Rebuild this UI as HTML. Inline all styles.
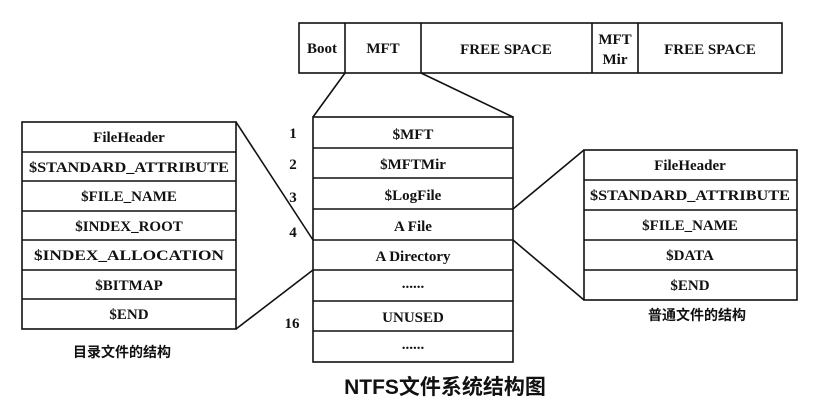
<!DOCTYPE html>
<html><head><meta charset="utf-8"><style>
html,body{margin:0;padding:0;background:#fff;width:827px;height:411px;overflow:hidden}
svg text{font-family:"Liberation Serif",serif;font-weight:bold;font-size:15px;fill:#111}
.cj{font-family:"Liberation Sans","Noto Sans CJK SC",sans-serif;font-size:14px}
</style></head><body>
<svg width="827" height="411" viewBox="0 0 827 411" xmlns="http://www.w3.org/2000/svg">
<g fill="none" stroke="#111" stroke-width="1.6">
<rect x="299" y="23" width="483" height="50"/>
<line x1="345" y1="23" x2="345" y2="73"/>
<line x1="421" y1="23" x2="421" y2="73"/>
<line x1="592" y1="23" x2="592" y2="73"/>
<line x1="638" y1="23" x2="638" y2="73"/>
<line x1="345" y1="73" x2="313" y2="117"/>
<line x1="421" y1="73" x2="513" y2="117"/>
<rect x="313" y="117" width="200" height="245"/>
<line x1="313" y1="148" x2="513" y2="148"/>
<line x1="313" y1="178" x2="513" y2="178"/>
<line x1="313" y1="209" x2="513" y2="209"/>
<line x1="313" y1="240" x2="513" y2="240"/>
<line x1="313" y1="270" x2="513" y2="270"/>
<line x1="313" y1="301" x2="513" y2="301"/>
<line x1="313" y1="331" x2="513" y2="331"/>
<rect x="22" y="122" width="214" height="207"/>
<line x1="22" y1="152" x2="236" y2="152"/>
<line x1="22" y1="181" x2="236" y2="181"/>
<line x1="22" y1="211" x2="236" y2="211"/>
<line x1="22" y1="240" x2="236" y2="240"/>
<line x1="22" y1="270" x2="236" y2="270"/>
<line x1="22" y1="299" x2="236" y2="299"/>
<line x1="236" y1="122" x2="313" y2="240"/>
<line x1="236" y1="329" x2="313" y2="270"/>
<rect x="584" y="150" width="213" height="150"/>
<line x1="584" y1="180" x2="797" y2="180"/>
<line x1="584" y1="210" x2="797" y2="210"/>
<line x1="584" y1="240" x2="797" y2="240"/>
<line x1="584" y1="270" x2="797" y2="270"/>
<line x1="513" y1="209" x2="584" y2="150"/>
<line x1="513" y1="240" x2="584" y2="300"/>
</g>
<g text-anchor="middle">
<text x="322" y="53" font-size="14">Boot</text>
<text x="383" y="53">MFT</text>
<text x="506" y="54" font-size="16">FREE SPACE</text>
<text x="615" y="44" font-size="14">MFT</text>
<text x="615" y="64" font-size="14">Mir</text>
<text x="710" y="54" font-size="16">FREE SPACE</text>
<text x="413" y="139" font-size="16">$MFT</text>
<text x="413" y="169" font-size="16">$MFTMir</text>
<text x="413" y="200" font-size="16">$LogFile</text>
<text x="413" y="231" font-size="16">A File</text>
<text x="413" y="261" font-size="16">A Directory</text>
<text x="413" y="288" font-size="12">......</text>
<text x="413" y="322" font-size="16">UNUSED</text>
<text x="413" y="349" font-size="12">......</text>
<text x="293" y="138">1</text>
<text x="293" y="169">2</text>
<text x="293" y="202">3</text>
<text x="293" y="237">4</text>
<text x="292" y="328">16</text>
<text x="129" y="142">FileHeader</text>
<text x="129" y="172" textLength="200" lengthAdjust="spacingAndGlyphs" font-size="16">$STANDARD_ATTRIBUTE</text>
<text x="129" y="201" font-size="16">$FILE_NAME</text>
<text x="129" y="231" font-size="16">$INDEX_ROOT</text>
<text x="129" y="260" textLength="190" lengthAdjust="spacingAndGlyphs" font-size="16">$INDEX_ALLOCATION</text>
<text x="129" y="290" font-size="16">$BITMAP</text>
<text x="129" y="319" font-size="16">$END</text>
<text x="690" y="170">FileHeader</text>
<text x="690" y="200" textLength="200" lengthAdjust="spacingAndGlyphs" font-size="16">$STANDARD_ATTRIBUTE</text>
<text x="690" y="230" font-size="16">$FILE_NAME</text>
<text x="690" y="260" font-size="16">$DATA</text>
<text x="690" y="290" font-size="16">$END</text>
<text class="cj" x="122" y="357">目录文件的结构</text>
<text class="cj" x="697" y="320">普通文件的结构</text>
<text x="445" y="394" style="font-family:'Liberation Sans','Noto Sans CJK SC',sans-serif;font-size:21px">NTFS文件系统结构图</text>
</g>
</svg>
</body></html>
